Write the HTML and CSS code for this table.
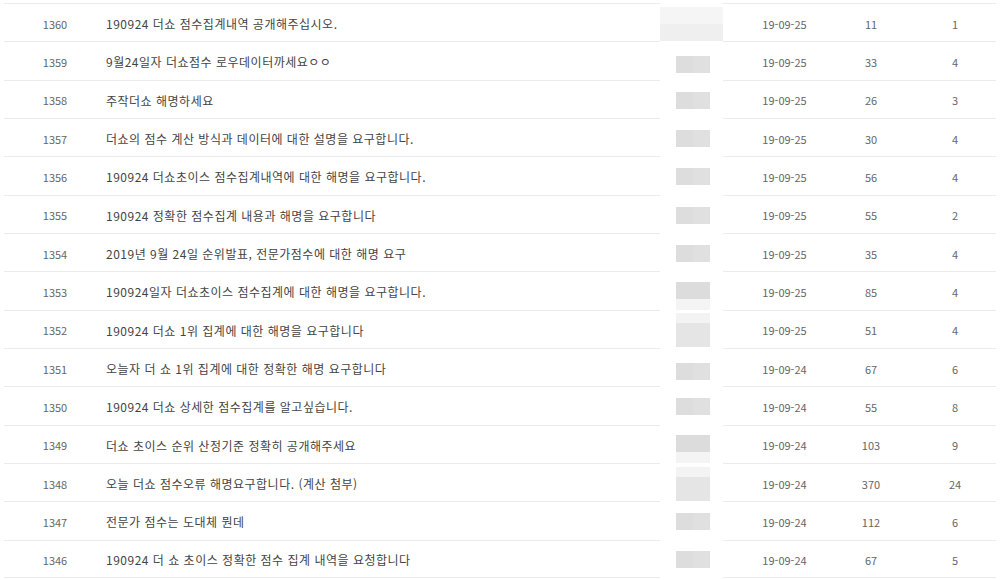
FILE: index.html
```html
<!DOCTYPE html>
<html lang="ko">
<head>
<meta charset="utf-8">
<link rel="stylesheet" href="styles.css">
</head>
<body>
<div class="board">
  <div class="row"><div class="c num">1360</div><div class="c title">190924 더쇼 점수집계내역 공개해주십시오.</div><div class="c name"><span class="blur wide"></span></div><div class="c date">19-09-25</div><div class="c views">11</div><div class="c rec">1</div></div>
  <div class="row"><div class="c num">1359</div><div class="c title">9월24일자 더쇼점수 로우데이터까세요ㅇㅇ</div><div class="c name"><span class="blur low"></span></div><div class="c date">19-09-25</div><div class="c views">33</div><div class="c rec">4</div></div>
  <div class="row"><div class="c num">1358</div><div class="c title">주작더쇼 해명하세요</div><div class="c name"><span class="blur"></span></div><div class="c date">19-09-25</div><div class="c views">26</div><div class="c rec">3</div></div>
  <div class="row"><div class="c num">1357</div><div class="c title">더쇼의 점수 계산 방식과 데이터에 대한 설명을 요구합니다.</div><div class="c name"><span class="blur"></span></div><div class="c date">19-09-25</div><div class="c views">30</div><div class="c rec">4</div></div>
  <div class="row"><div class="c num">1356</div><div class="c title">190924 더쇼초이스 점수집계내역에 대한 해명을 요구합니다.</div><div class="c name"><span class="blur"></span></div><div class="c date">19-09-25</div><div class="c views">56</div><div class="c rec">4</div></div>
  <div class="row"><div class="c num">1355</div><div class="c title">190924 정확한 점수집계 내용과 해명을 요구합니다</div><div class="c name"><span class="blur"></span></div><div class="c date">19-09-25</div><div class="c views">55</div><div class="c rec">2</div></div>
  <div class="row"><div class="c num">1354</div><div class="c title">2019년 9월 24일 순위발표, 전문가점수에 대한 해명 요구</div><div class="c name"><span class="blur"></span></div><div class="c date">19-09-25</div><div class="c views">35</div><div class="c rec">4</div></div>
  <div class="row"><div class="c num">1353</div><div class="c title">190924일자 더쇼초이스 점수집계에 대한 해명을 요구합니다.</div><div class="c name"><span class="blur tall"></span></div><div class="c date">19-09-25</div><div class="c views">85</div><div class="c rec">4</div></div>
  <div class="row"><div class="c num">1352</div><div class="c title">190924 더쇼 1위 집계에 대한 해명을 요구합니다</div><div class="c name"><span class="blur tallb"></span></div><div class="c date">19-09-25</div><div class="c views">51</div><div class="c rec">4</div></div>
  <div class="row"><div class="c num">1351</div><div class="c title">오늘자 더 쇼 1위 집계에 대한 정확한 해명 요구합니다</div><div class="c name"><span class="blur low"></span></div><div class="c date">19-09-24</div><div class="c views">67</div><div class="c rec">6</div></div>
  <div class="row"><div class="c num">1350</div><div class="c title">190924 더쇼 상세한 점수집계를 알고싶습니다.</div><div class="c name"><span class="blur"></span></div><div class="c date">19-09-24</div><div class="c views">55</div><div class="c rec">8</div></div>
  <div class="row"><div class="c num">1349</div><div class="c title">더쇼 초이스 순위 산정기준 정확히 공개해주세요</div><div class="c name"><span class="blur tall"></span></div><div class="c date">19-09-24</div><div class="c views">103</div><div class="c rec">9</div></div>
  <div class="row"><div class="c num">1348</div><div class="c title">오늘 더쇼 점수오류 해명요구합니다. (계산 첨부)</div><div class="c name"><span class="blur tallb"></span></div><div class="c date">19-09-24</div><div class="c views">370</div><div class="c rec">24</div></div>
  <div class="row"><div class="c num">1347</div><div class="c title">전문가 점수는 도대체 뭔데</div><div class="c name"><span class="blur"></span></div><div class="c date">19-09-24</div><div class="c views">112</div><div class="c rec">6</div></div>
  <div class="row"><div class="c num">1346</div><div class="c title">190924 더 쇼 초이스 정확한 점수 집계 내역을 요청합니다</div><div class="c name"><span class="blur"></span></div><div class="c date">19-09-24</div><div class="c views">67</div><div class="c rec">5</div></div>
</div>
</body>
</html>
```
FILE: styles.css
```css
html, body {
  margin: 0;
  padding: 0;
  background: #fff;
}
body {
  font-family: "Noto Sans CJK KR", "Noto Sans", "Liberation Sans", sans-serif;
  color: #555;
}
.board {
  margin: 3px 4px 0 4px;
  width: 992px;
}
.row {
  display: flex;
  height: 38.33px;
}
.c {
  box-sizing: border-box;
  display: flex;
  align-items: center;
  justify-content: center;
  border-top: 1px solid #ebebeb;
  padding-top: 2px;
  font-size: 11px;
  color: #666;
  white-space: nowrap;
}
.row:last-child .c {
  border-bottom: 1px solid #ebebeb;
}
.num { width: 102px; }
.title {
  width: 554px;
  justify-content: flex-start;
  font-size: 12px;
  letter-spacing: 0.5px;
  color: #444;
}
.name {
  width: 63px;
  border-top-color: transparent !important;
  border-bottom-color: transparent !important;
}
.date { width: 123px; }
.views { width: 50px; }
.rec { width: 100px; padding-left: 18px; }
.blur {
  display: block;
  width: 34px;
  height: 17px;
  background: linear-gradient(90deg, #dddddd 50%, #e0e0e0 50%);
  margin-left: 3px;
}
.blur.low { margin-top: 6px; }
.blur.wide {
  width: 63px;
  height: 34px;
  margin-left: 0;
  background: linear-gradient(180deg, #f5f5f5 50%, #efefef 50%);
}
.blur.tall {
  height: 28px;
  margin-top: 8px;
  background: linear-gradient(180deg, #dcdcdc 62%, #f4f4f4 62%);
}
.blur.tallb {
  height: 34px;
  background: linear-gradient(180deg, #f3f3f3 30%, #e5e5e5 30%);
}
```
